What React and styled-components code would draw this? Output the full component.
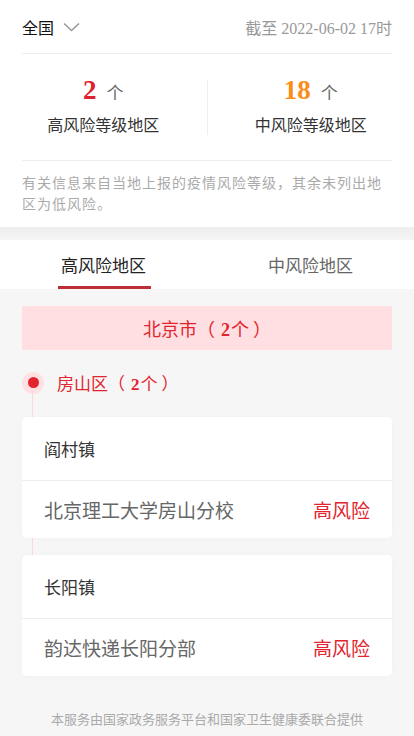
import React from "react";
import styled, { createGlobalStyle } from "styled-components";

const Global = createGlobalStyle`
  html, body { margin: 0; padding: 0; }
  body {
    background: #f6f6f6;
    font-family: "Liberation Serif", "Noto Sans CJK SC", serif;
    -webkit-font-smoothing: antialiased;
  }
`;

const Page = styled.div`
  width: 414px;
  min-height: 736px;
  background: #f6f6f6;
`;

const Top = styled.section`
  background: #fff;
`;

const Header = styled.div`
  margin: 0 22px;
  height: 54px;
  display: flex;
  align-items: center;
  justify-content: space-between;
  border-bottom: 1px solid #eeeeee;
  box-sizing: border-box;
`;

const Region = styled.div`
  display: flex;
  align-items: center;
  gap: 9px;
  font-size: 16px;
  color: #111;
`;

const Deadline = styled.div`
  font-size: 16px;
  color: #999;
`;

const Stats = styled.div`
  display: flex;
  height: 106px;
  align-items: center;
`;

const Stat = styled.div`
  flex: 1;
  display: flex;
  flex-direction: column;
  align-items: center;
  gap: 12px;
`;

const StatDivider = styled.div`
  width: 1px;
  height: 55px;
  background: #eeeeee;
`;

const Count = styled.div`
  display: flex;
  align-items: baseline;
  gap: 10px;
  height: 26px;
  line-height: 26px;
`;

const Num = styled.span`
  font-size: 27px;
  font-weight: bold;
  color: ${(p) => p.$color};
`;

const Unit = styled.span`
  font-size: 17px;
  color: #666;
`;

const StatLabel = styled.div`
  font-size: 16px;
  color: #333;
  line-height: 22px;
`;

const Note = styled.p`
  margin: 0 22px;
  padding: 12px 0 12px;
  border-top: 1px solid #eeeeee;
  font-size: 14px;
  letter-spacing: 1px;
  line-height: 21px;
  color: #aaa;
`;

const Band = styled.div`
  height: 13px;
  background: linear-gradient(#eeeeee, #f4f4f4);
`;

const Tabs = styled.nav`
  display: flex;
  height: 49px;
  background: #fff;
`;

const Tab = styled.div`
  flex: 1;
  position: relative;
  display: flex;
  align-items: center;
  justify-content: center;
  font-size: 17px;
  color: ${(p) => (p.$active ? "#222" : "#666")};
  &::after {
    content: "";
    display: ${(p) => (p.$active ? "block" : "none")};
    position: absolute;
    left: 50%;
    bottom: 0;
    width: 93px;
    margin-left: -46px;
    height: 3px;
    background: #bf2e38;
  }
`;

const Content = styled.main`
  padding: 17px 22px 0;
`;

const CityBanner = styled.div`
  height: 44px;
  background: #ffdfe1;
  display: flex;
  align-items: center;
  justify-content: center;
  font-size: 18px;
  color: #e2242f;
`;

const Qty = styled.span`
  margin: 0 4px 0 6px;
  & > b {
    font-weight: bold;
    margin-right: 1px;
  }
`;

const Timeline = styled.div`
  position: relative;
  &::before {
    content: "";
    position: absolute;
    left: 10px;
    top: 43px;
    width: 1px;
    height: 162px;
    background: #ffd6da;
  }
`;

const District = styled.div`
  height: 65px;
  display: flex;
  align-items: center;
  gap: 13px;
  font-size: 17px;
  color: #e2242f;
`;

const Dot = styled.span`
  width: 22px;
  height: 22px;
  border-radius: 50%;
  background: #ffe0e3;
  display: flex;
  align-items: center;
  justify-content: center;
  &::after {
    content: "";
    width: 11px;
    height: 11px;
    border-radius: 50%;
    background: #e2242f;
  }
`;

const Cards = styled.div`
  position: relative;
  margin-top: 2px;
  display: flex;
  flex-direction: column;
  gap: 17px;
`;

const Card = styled.div`
  background: #fff;
  border-radius: 5px;
  box-shadow: 0 0 6px rgba(0, 0, 0, 0.02);
`;

const Town = styled.div`
  height: 63px;
  display: flex;
  align-items: center;
  padding: 0 22px;
  font-size: 17px;
  color: #333;
  border-bottom: 1px solid #eeeeee;
`;

const Place = styled.div`
  height: 57px;
  display: flex;
  align-items: center;
  justify-content: space-between;
  padding: 0 22px;
  font-size: 19px;
  color: #666;
`;

const Level = styled.span`
  color: #e2242f;
`;

const Footer = styled.footer`
  text-align: center;
  font-size: 13px;
  color: #aaa;
  padding: 34px 0 6px;
  line-height: 20px;
`;

const Chevron = () => (
  <svg width="17" height="10" viewBox="0 0 17 10" fill="none">
    <path d="M1 1.5 L8.5 8.5 L16 1.5" stroke="#999" strokeWidth="1.6" />
  </svg>
);

const places = [
  { town: "阎村镇", place: "北京理工大学房山分校" },
  { town: "长阳镇", place: "韵达快递长阳分部" },
];

export default function App() {
  return (
    <Page>
      <Global />
      <Top>
        <Header>
          <Region>
            全国
            <Chevron />
          </Region>
          <Deadline>截至 2022-06-02 17时</Deadline>
        </Header>
        <Stats>
          <Stat>
            <Count>
              <Num $color="#e0202c">2</Num>
              <Unit>个</Unit>
            </Count>
            <StatLabel>高风险等级地区</StatLabel>
          </Stat>
          <StatDivider />
          <Stat>
            <Count>
              <Num $color="#fb8c17">18</Num>
              <Unit>个</Unit>
            </Count>
            <StatLabel>中风险等级地区</StatLabel>
          </Stat>
        </Stats>
        <Note>有关信息来自当地上报的疫情风险等级，其余未列出地区为低风险。</Note>
      </Top>
      <Band />
      <Tabs>
        <Tab $active>高风险地区</Tab>
        <Tab>中风险地区</Tab>
      </Tabs>
      <Content>
        <CityBanner>
          北京市（<Qty><b>2</b>个</Qty>）
        </CityBanner>
        <Timeline>
          <District>
            <Dot />
            <span>
              房山区（<Qty><b>2</b>个</Qty>）
            </span>
          </District>
          <Cards>
            {places.map((p) => (
              <Card key={p.town}>
                <Town>{p.town}</Town>
                <Place>
                  <span>{p.place}</span>
                  <Level>高风险</Level>
                </Place>
              </Card>
            ))}
          </Cards>
        </Timeline>
      </Content>
      <Footer>本服务由国家政务服务平台和国家卫生健康委联合提供</Footer>
    </Page>
  );
}
